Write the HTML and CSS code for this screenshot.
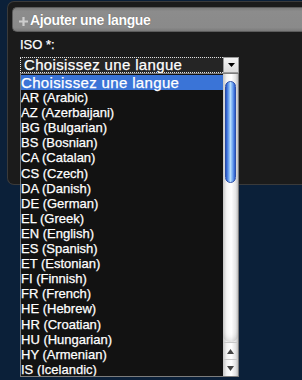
FILE: index.html
```html
<!DOCTYPE html>
<html lang="fr">
<head>
<meta charset="utf-8">
<title>Ajouter une langue</title>
<link rel="stylesheet" href="styles.css">
</head>
<body>
<div class="panel">
  <div class="header"><svg class="plus" width="9" height="9" viewBox="0 0 9 9"><path d="M3.4 0H5.6V3.4H9V5.6H5.6V9H3.4V5.6H0V3.4H3.4Z" fill="#cdcdcd"/></svg><span class="title">Ajouter une langue</span></div>
  <div class="field">
    <label class="label">ISO *:</label>
    <div class="select-wrap">
      <div class="select">
        <span class="select-text">Choisissez une langue</span>
        <span class="select-btn"><svg width="7" height="4" viewBox="0 0 7 4"><path d="M0 0H7L3.5 4Z" fill="#000"/></svg></span>
      </div>
      <div class="dropdown">
        <ul class="options">
          <li class="opt opt-first selected">Choisissez une langue</li>
          <li class="opt">AR (Arabic)</li>
          <li class="opt">AZ (Azerbaijani)</li>
          <li class="opt">BG (Bulgarian)</li>
          <li class="opt">BS (Bosnian)</li>
          <li class="opt">CA (Catalan)</li>
          <li class="opt">CS (Czech)</li>
          <li class="opt">DA (Danish)</li>
          <li class="opt">DE (German)</li>
          <li class="opt">EL (Greek)</li>
          <li class="opt">EN (English)</li>
          <li class="opt">ES (Spanish)</li>
          <li class="opt">ET (Estonian)</li>
          <li class="opt">FI (Finnish)</li>
          <li class="opt">FR (French)</li>
          <li class="opt">HE (Hebrew)</li>
          <li class="opt">HR (Croatian)</li>
          <li class="opt">HU (Hungarian)</li>
          <li class="opt">HY (Armenian)</li>
          <li class="opt">IS (Icelandic)</li>
        </ul>
        <div class="scrollbar">
          <div class="thumb"></div>
          <div class="track"></div>
          <div class="arrow arrow-up"><svg width="7" height="5" viewBox="0 0 7 5"><path d="M3.5 0L7 5H0Z" fill="#444"/></svg></div>
          <div class="arrow arrow-down"><svg width="7" height="5" viewBox="0 0 7 5"><path d="M0 0H7L3.5 5Z" fill="#444"/></svg></div>
        </div>
      </div>
    </div>
  </div>
</div>
</body>
</html>
```
FILE: styles.css
```css
html, body {
  margin: 0;
  padding: 0;
  background: #0b2039;
  height: 100%;
  overflow: hidden;
  font-family: "Liberation Sans", Arial, sans-serif;
  color: #fff;
}

.panel {
  margin: 1px 0 0 7px;
  height: 184px;
  box-sizing: border-box;
  background: #1b1b1b;
  border: 1px solid #3a3a3a;
  border-right: none;
  border-radius: 7px 0 0 7px;
  padding: 5px 0 0 4px;
}

.header {
  height: 25px;
  box-sizing: border-box;
  background: linear-gradient(#7e7e7e, #8c8c8c 15%, #8a8a8a 85%, #7a7a7a);
  border: 1px solid #5c5c5c;
  border-right: none;
  border-radius: 5px 0 0 5px;
  display: flex;
  align-items: center;
  padding-left: 6px;
  gap: 2px;
  font-weight: bold;
  font-size: 14px;
  letter-spacing: -0.35px;
  text-shadow: 0 0 1px rgba(0,0,0,0.4);
}

.plus {
  margin-top: 3px;
  flex-shrink: 0;
}

.title {
  color: #fff;
}

.field {
  margin: 5px 0 0 8px;
}

.label {
  display: block;
  font-size: 13px;
  line-height: 15px;
  margin-bottom: 5px;
  -webkit-text-stroke: 0.25px #fff;
}

.select-wrap {
  position: relative;
  width: 219px;
}

.select {
  height: 16px;
  box-sizing: border-box;
  border: 1px dotted #e0e0e0;
  background: #252525;
  display: flex;
  align-items: center;
  justify-content: space-between;
}

.select-text {
  padding-left: 3px;
  font-size: 15px;
  letter-spacing: 0.35px;
  line-height: 14px;
  -webkit-text-stroke: 0.25px #fff;
}

.select-btn {
  width: 16px;
  height: 16px;
  margin: -1px -1px -1px 0;
  box-sizing: border-box;
  background: linear-gradient(#f4f4f4, #dcdcdc);
  border: 1px solid #9a9a9a;
  display: flex;
  align-items: center;
  justify-content: center;
}

.dropdown {
  position: absolute;
  top: 16px;
  left: 0;
  width: 219px;
  height: 304px;
  box-sizing: border-box;
  border: 1px solid #7c7c7c;
  background: #121212;
  display: flex;
}

.options {
  list-style: none;
  margin: 0;
  padding: 1px 0 0 0;
  flex: 1;
  overflow: hidden;
}

.opt {
  font-size: 13px;
  line-height: 15.1px;
  height: 15.1px;
  white-space: nowrap;
  color: #fff;
  -webkit-text-stroke: 0.25px #fff;
}

.opt-first {
  font-size: 15px;
  letter-spacing: 0.35px;
}

.selected {
  background: #3a74d7;
}

.scrollbar {
  width: 15px;
  display: flex;
  flex-direction: column;
  background: linear-gradient(to right, #c4c4c4, #f2f2f2 25%, #ffffff 55%, #e2e2e2 85%, #bdbdbd);
}

.thumb {
  margin: 7px 2px 0 2px;
  height: 102px;
  border-radius: 6px;
  box-sizing: border-box;
  border: 1px solid #2b4fa8;
  background: linear-gradient(to right, #2452c4, #5f96ec 25%, #b4deff 50%, #6aa0f0 75%, #2a5acb);
}

.track {
  flex: 1;
  background: linear-gradient(to right, #c8c8c8, #f4f4f4 25%, #ffffff 55%, #e6e6e6 85%, #c0c0c0);
  border-radius: 0 0 7px 7px;
  box-shadow: inset 0 -6px 6px -4px rgba(0,0,0,0.15);
}

.arrow {
  height: 17px;
  display: flex;
  align-items: center;
  justify-content: center;
  border-top: 1px solid #c8c8c8;
  box-sizing: border-box;
}
```
